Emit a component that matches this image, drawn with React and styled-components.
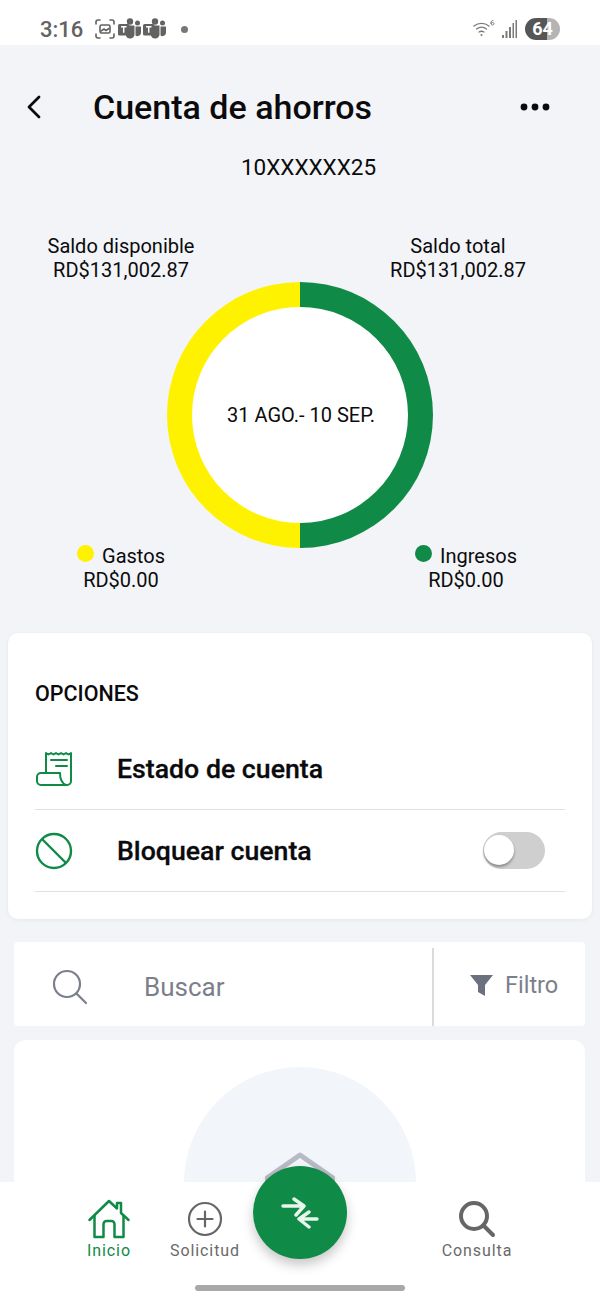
import styled, { createGlobalStyle } from "styled-components";

const GREEN = "#0f8a47";

const GlobalStyle = createGlobalStyle`
  * { box-sizing: border-box; }
  html, body { margin: 0; padding: 0; background: #f3f4f7; }
  body { font-family: Roboto, "Liberation Sans", sans-serif; color: #0b0b0d; }
`;

const Screen = styled.div`
  position: relative;
  width: 600px;
  height: 1300px;
  overflow: hidden;
  background: #f3f4f7;
`;

const StatusBar = styled.div`
  height: 45px;
  padding: 13px 40px 0;
  background: #fff;
  display: flex;
  align-items: center;
  color: #626262;
`;

const Time = styled.span`
  font-size: 22px;
  font-weight: 500;
  margin-right: 11px;
`;

const StatusIcons = styled.div`
  display: flex;
  align-items: center;
  gap: 2px;
`;

const NotifDot = styled.span`
  width: 7px;
  height: 7px;
  margin-left: 13px;
  border-radius: 50%;
  background: #777;
`;

const StatusRight = styled.div`
  margin-left: auto;
  display: flex;
  align-items: center;
  gap: 7px;
`;

const Battery = styled.div`
  width: 35px;
  height: 22px;
  border-radius: 11px;
  background: linear-gradient(90deg, #565656 0 64%, #b4b4b4 64% 100%);
  color: #fff;
  font-size: 18px;
  font-weight: 700;
  text-align: center;
  line-height: 22px;
`;

const Header = styled.header`
  height: 78px;
  margin-top: 23px;
  padding: 0 50px 0 26px;
  display: flex;
  align-items: center;
`;

const Title = styled.h1`
  margin: 0 0 0 51px;
  font-size: 34px;
  font-weight: 500;
  flex: 1;
`;

const AccountNumber = styled.div`
  padding-left: 17px;
  text-align: center;
  font-size: 22.5px;
  font-weight: 400;
  margin-top: 8px;
  line-height: 26px;
`;

const Chart = styled.section`
  margin-top: 54px;
  display: flex;
  flex-direction: column;
  align-items: center;
`;

const LabelRow = styled.div`
  width: 100%;
  height: ${(p) => p.$height}px;
  margin-top: ${(p) => p.$top || 0}px;
  position: relative;
  z-index: 1;
  display: flex;
  justify-content: space-between;
  padding: 0 ${(p) => p.$right}px 0 ${(p) => p.$left}px;
`;

const Label = styled.div`
  width: 160px;
  text-align: center;
  font-size: 20px;
  line-height: 24px;
  font-weight: 400;
`;

const LabelName = styled.div`
  display: flex;
  justify-content: center;
  align-items: center;
  gap: 8px;
`;

const Dot = styled.span`
  width: 17px;
  height: 17px;
  margin-top: -5px;
  border-radius: 50%;
  background: ${(p) => p.$color};
`;

const Ring = styled.div`
  width: 266px;
  height: 266px;
  border-radius: 50%;
  background: linear-gradient(90deg, #fff200 0 50%, ${GREEN} 50% 100%);
  display: flex;
  align-items: center;
  justify-content: center;
`;

const RingInner = styled.div`
  width: 216px;
  height: 216px;
  padding-left: 2px;
  border-radius: 50%;
  background: #fff;
  display: flex;
  align-items: center;
  justify-content: center;
  font-size: 20px;
`;

const OptionsCard = styled.section`
  margin: 41px 8px 0;
  height: 286px;
  padding: 44px 27px 0;
  background: #fff;
  border-radius: 10px;
  box-shadow: 0 1px 4px rgba(30, 30, 50, 0.06);
`;

const CardTitle = styled.h2`
  margin: 0 0 17px;
  font-size: 21.5px;
  line-height: 34px;
  font-weight: 500;
`;

const OptionRow = styled.div`
  height: 82px;
  display: flex;
  align-items: center;
  border-bottom: 1px solid #dfe1e4;
  padding-right: 20px;
`;

const OptionIcon = styled.div`
  width: 82px;
  display: flex;
`;

const OptionText = styled.span`
  flex: 1;
  font-size: 26.7px;
  font-weight: 500;
  -webkit-text-stroke: 0.3px #0b0b0d;
`;

const Toggle = styled.div`
  width: 62px;
  height: 37px;
  border-radius: 19px;
  background: #cfcfcf;
  position: relative;
`;

const Knob = styled.div`
  position: absolute;
  left: 1px;
  top: 3px;
  width: 30px;
  height: 30px;
  border-radius: 50%;
  background: #fff;
  box-shadow: 0 2px 3px rgba(0, 0, 0, 0.35);
`;

const SearchBar = styled.section`
  margin: 23px 15px 0 14px;
  height: 84px;
  background: #fff;
  border-radius: 4px;
  display: flex;
  align-items: center;
  color: #7b7f8b;
`;

const SearchField = styled.div`
  width: 418px;
  height: 100%;
  padding: 6px 0 0 38px;
  display: flex;
  align-items: center;
  gap: 56px;
  font-size: 26px;
`;

const FilterButton = styled.div`
  flex: 1;
  height: 78px;
  margin-top: 6px;
  border-left: 2px solid #d9dbdf;
  padding: 0 0 4px 36px;
  display: flex;
  align-items: center;
  gap: 12px;
  font-size: 23.500px;
`;

const EmptyCard = styled.section`
  margin: 14px 15px 0 14px;
  height: 300px;
  padding-top: 27px;
  background: #fff;
  border-radius: 12px;
  display: flex;
  justify-content: center;
`;

const EmptyArt = styled.div`
  width: 232px;
  height: 232px;
  border-radius: 50%;
  background: #f2f5f9;
  display: flex;
  justify-content: center;
  padding-top: 85px;
`;

const BottomNav = styled.nav`
  position: absolute;
  left: 0;
  right: 0;
  bottom: 0;
  height: 118px;
  padding: 17px 0 0 61px;
  background: #fff;
  display: flex;
  align-items: flex-start;
`;

const NavItem = styled.div`
  width: 96px;
  margin-left: ${(p) => p.$gap || 0}px;
  display: flex;
  flex-direction: column;
  align-items: center;
  gap: 2px;
  font-size: 16px;
  letter-spacing: 0.9px;
  color: ${(p) => (p.$active ? GREEN : "#6a6a6a")};
`;

const NavIcon = styled.div`
  height: 40px;
  display: flex;
  align-items: center;
`;

const Fab = styled.div`
  width: 94px;
  height: 93px;
  margin: -33px 1px 0 0;
  border-radius: 50%;
  background: ${GREEN};
  box-shadow: 0 6px 12px rgba(0, 0, 0, 0.22);
  display: flex;
  align-items: center;
  justify-content: center;
  flex: none;
`;

const HomeBar = styled.div`
  position: absolute;
  left: 195px;
  bottom: 9px;
  width: 210px;
  height: 6px;
  border-radius: 3px;
  background: #a9a9a9;
`;

const TeamsIcon = () => (
  <svg width="23" height="22" viewBox="0 0 23 22" fill="#626262">
    <circle cx="12" cy="3.500" r="3.200" />
    <circle cx="19.500" cy="5" r="2.500" />
    <path d="M8 7.500h8.500v9a4.500 4.500 0 0 1-8.500 1.500z" />
    <path d="M17.500 8.500H23v6.500a3.500 3.500 0 0 1-5.500 2.500z" />
    <rect x="0" y="6" width="11.500" height="11.500" rx="1.500" />
    <path d="M3 8.800h5.500M5.700 8.800v6" stroke="#fff" strokeWidth="1.500" />
  </svg>
);

const ScanIcon = () => (
  <svg width="22" height="22" viewBox="0 0 22 22" fill="none" stroke="#626262" strokeWidth="1.600" strokeLinecap="round">
    <path d="M2 6V4a2 2 0 0 1 2-2h2M16 2h2a2 2 0 0 1 2 2v2M20 16v2a2 2 0 0 1-2 2h-2M6 20H4a2 2 0 0 1-2-2v-2" />
    <rect x="6" y="7" width="10" height="8" rx="1.500" />
    <path d="M7 13l3-2 2 1.500 3-2" />
  </svg>
);

const WifiIcon = () => (
  <svg width="22" height="20" viewBox="0 0 22 20" fill="none" stroke="#7a7a7a" strokeWidth="1.300" strokeLinecap="round">
    <path d="M1 7a12 12 0 0 1 15 0M3.500 10a8.500 8.500 0 0 1 10 0M6 13a5 5 0 0 1 5 0" />
    <circle cx="8.500" cy="16" r="1" fill="#7a7a7a" stroke="none" />
    <path d="M20 1.500c-1.500 0-2 1-2 2.500s.5 2 1.500 2 1.500-.6 1.500-1.300-.6-1.200-1.500-1.200-1.500.5-1.500 1" strokeWidth="1" />
  </svg>
);

const SignalIcon = () => (
  <svg width="16" height="20" viewBox="0 0 16 20" fill="#7a7a7a">
    <rect x="0" y="16" width="2" height="3" />
    <rect x="3.500" y="12" width="2" height="7" />
    <rect x="7" y="8" width="2" height="11" />
    <rect x="10.500" y="4" width="1.500" height="15" />
    <rect x="13.500" y="1" width="1.500" height="18" />
  </svg>
);

const ReceiptIcon = () => (
  <svg width="38" height="36" viewBox="-1 -1 38 36" fill="none" stroke={GREEN} strokeWidth="2" strokeLinejoin="round" strokeLinecap="round">
    <path d="M10 21V1l2.500 1.500L15 1l2.500 1.500L20 1l2.500 1.500L25 1l2.500 1.500L30 1l2.500 1.500L35 1v28a4 4 0 0 1-4 4H5a4 4 0 0 1-4-4v-4a4 4 0 0 1 4-4h19c0 6 1 10 6 12" />
    <path d="M15 8h16M20 14h11" />
  </svg>
);

const BlockIcon = () => (
  <svg width="38" height="38" viewBox="-1 0 38 38" fill="none" stroke={GREEN} strokeWidth="2.400">
    <circle cx="18" cy="19" r="17" />
    <path d="M6 7l24 24" />
  </svg>
);

const SearchIcon = () => (
  <svg width="36" height="36" viewBox="0 0 36 36" fill="none" stroke="#7b7f8b" strokeWidth="2.200" strokeLinecap="round">
    <circle cx="15" cy="15" r="13" />
    <path d="M24.500 24.500L34 34" />
  </svg>
);

const FilterIcon = () => (
  <svg width="23" height="21" viewBox="0 0 23 21" fill="#6b7080">
    <path d="M0 0h23l-8 10v11l-7-4v-7z" />
  </svg>
);

const BoxRoof = () => (
  <svg width="70" height="40" viewBox="0 0 70 40" fill="none" stroke="#b7bac4" strokeWidth="5" strokeLinejoin="round">
    <path d="M2 26L35 3l33 23v14H2z" />
  </svg>
);

const HomeIcon = () => (
  <svg width="42" height="40" viewBox="0 0 42 40" fill="none" stroke={GREEN} strokeWidth="2.500" strokeLinejoin="round" strokeLinecap="round">
    <path d="M1.500 21L21 2l8 7.500V4h4v10l7.500 7" />
    <path d="M6.500 17v21h9V25a3 3 0 0 1 3-3h5a3 3 0 0 1 3 3v13h9V17" />
  </svg>
);

const PlusCircleIcon = () => (
  <svg width="36" height="36" viewBox="0 0 36 36" fill="none" stroke="#666" strokeWidth="2.200" strokeLinecap="round">
    <circle cx="18" cy="18" r="16" />
    <path d="M18 10.500v15M10.500 18h15" />
  </svg>
);

const BoldSearchIcon = () => (
  <svg width="38" height="38" viewBox="0 0 38 38" fill="none" stroke="#666" strokeWidth="4" strokeLinecap="round">
    <circle cx="16" cy="16" r="13" />
    <path d="M25.500 25.500L35 35" />
  </svg>
);

const ExchangeIcon = () => (
  <svg width="38" height="32" viewBox="0 0 38 32" fill="none" stroke="#e8f6ec" strokeWidth="3.400" strokeLinecap="round" strokeLinejoin="round">
    <path d="M2 9H22M13 2l10 7-8 9" />
    <path d="M36 22H19M28 15l-10 7 10 8" />
  </svg>
);

const App = () => {
  return (
    <Screen>
      <GlobalStyle />
      <StatusBar>
        <Time>3:16</Time>
        <StatusIcons>
          <ScanIcon />
          <TeamsIcon />
          <TeamsIcon />
          <NotifDot />
        </StatusIcons>
        <StatusRight>
          <WifiIcon />
          <SignalIcon />
          <Battery>64</Battery>
        </StatusRight>
      </StatusBar>

      <Header>
        <svg width="16" height="24" viewBox="0 0 16 24" fill="none" stroke="#0b0b0d" strokeWidth="2.800" strokeLinecap="round" strokeLinejoin="round">
          <path d="M13 2L3 12l10 10" />
        </svg>
        <Title>Cuenta de ahorros</Title>
        <svg width="30" height="8" viewBox="0 0 30 8" fill="#0b0b0d">
          <circle cx="4" cy="4" r="3.400" />
          <circle cx="15" cy="4" r="3.400" />
          <circle cx="26" cy="4" r="3.400" />
        </svg>
      </Header>
      <AccountNumber>10XXXXXX25</AccountNumber>

      <Chart>
        <LabelRow $height={48} $left={41} $right={62}>
          <Label>
            Saldo disponible
            <br />
            RD$131,002.87
          </Label>
          <Label>
            Saldo total
            <br />
            RD$131,002.87
          </Label>
        </LabelRow>
        <Ring>
          <RingInner>31 AGO.- 10 SEP.</RingInner>
        </Ring>
        <LabelRow $height={48} $top={-4} $left={41} $right={54}>
          <Label>
            <LabelName>
              <Dot $color="#fff200" />
              Gastos
            </LabelName>
            RD$0.00
          </Label>
          <Label>
            <LabelName>
              <Dot $color={GREEN} />
              Ingresos
            </LabelName>
            RD$0.00
          </Label>
        </LabelRow>
      </Chart>

      <OptionsCard>
        <CardTitle>OPCIONES</CardTitle>
        <OptionRow>
          <OptionIcon>
            <ReceiptIcon />
          </OptionIcon>
          <OptionText>Estado de cuenta</OptionText>
        </OptionRow>
        <OptionRow>
          <OptionIcon>
            <BlockIcon />
          </OptionIcon>
          <OptionText>Bloquear cuenta</OptionText>
          <Toggle>
            <Knob />
          </Toggle>
        </OptionRow>
      </OptionsCard>

      <SearchBar>
        <SearchField>
          <SearchIcon />
          Buscar
        </SearchField>
        <FilterButton>
          <FilterIcon />
          Filtro
        </FilterButton>
      </SearchBar>

      <EmptyCard>
        <EmptyArt>
          <BoxRoof />
        </EmptyArt>
      </EmptyCard>

      <BottomNav>
        <NavItem $active>
          <NavIcon>
            <HomeIcon />
          </NavIcon>
          Inicio
        </NavItem>
        <NavItem>
          <NavIcon>
            <PlusCircleIcon />
          </NavIcon>
          Solicitud
        </NavItem>
        <Fab>
          <ExchangeIcon />
        </Fab>
        <NavItem $gap={81}>
          <NavIcon>
            <BoldSearchIcon />
          </NavIcon>
          Consulta
        </NavItem>
      </BottomNav>
      <HomeBar />
    </Screen>
  );
};

export default App;
